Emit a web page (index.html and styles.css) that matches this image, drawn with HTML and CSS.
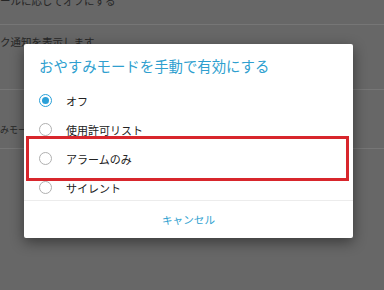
FILE: index.html
```html
<!DOCTYPE html>
<html lang="ja">
<head>
  <meta charset="UTF-8">
  <title>おやすみモード</title>
  <link rel="stylesheet" href="styles.css">
</head>
<body>
  <!-- settings screen behind the dimmed overlay -->
  <div class="settings">
    <div class="setting-row first">
      <p class="setting-text">ールに応じてオフにする</p>
    </div>
    <div class="setting-row second">
      <p class="setting-text">ク通知を表示します</p>
    </div>
    <div class="setting-row third">
      <p class="setting-text">みモードの設定</p>
    </div>
  </div>

  <!-- dialog -->
  <div class="dialog">
    <h2 class="dialog-title">おやすみモードを手動で有効にする</h2>
    <ul class="choice-list">
      <li class="choice"><span class="radio checked"></span>オフ</li>
      <li class="choice"><span class="radio"></span>使用許可リスト</li>
      <li class="choice marked"><span class="radio"></span>アラームのみ</li>
      <li class="choice"><span class="radio"></span>サイレント</li>
    </ul>
    <div class="dialog-actions">
      <button class="text-button">キャンセル</button>
    </div>
  </div>
</body>
</html>
```

FILE: styles.css
```css
body {
  margin: 0;
  width: 384px;
  height: 290px;
  overflow: hidden;
  background-color: #676767;
  font-family: "Noto Sans CJK JP", "Noto Sans", sans-serif;
  position: relative;
}

.settings {
  margin-top: -12px;
}

.setting-row {
  border-bottom: 1px solid #767676;
}

.setting-row.first {
  height: 36px;
}

.setting-row.second {
  height: 64px;
}

.setting-row.third {
  height: 58px;
}

.setting-text {
  margin: 0;
  font-size: 10.5px;
  line-height: 14px;
  color: #262626;
  white-space: nowrap;
}

.first .setting-text {
  padding-top: 6px;
}

.second .setting-text {
  padding-top: 10px;
}

.third .setting-text {
  padding-top: 33px;
  font-size: 9px;
}

.dialog {
  position: absolute;
  left: 24px;
  top: 44px;
  width: 329px;
  height: 194px;
  background-color: white;
  border-radius: 2px;
  box-shadow: 0 4px 14px rgba(0, 0, 0, 0.45);
  display: flex;
  flex-direction: column;
}

.dialog-title {
  margin: 0;
  padding: 12px 15px 0;
  height: 30px;
  font-size: 14.4px;
  line-height: 20px;
  font-weight: normal;
  color: #2f9fcf;
  white-space: nowrap;
}

.choice-list {
  list-style-type: none;
  margin: 0;
  padding: 0;
  height: 114px;
  overflow: hidden;
}

.choice {
  position: relative;
  display: flex;
  align-items: center;
  gap: 14px;
  height: 29px;
  padding-left: 15px;
  font-size: 11px;
  color: #222;
}

.radio {
  width: 11px;
  height: 11px;
  border: 1px solid #b0b0b0;
  border-radius: 50%;
  box-sizing: content-box;
}

.radio.checked {
  width: 7px;
  height: 7px;
  border: 1.5px solid #2aa0d8;
  padding: 2px;
  background-color: #2aa0d8;
  background-clip: content-box;
}

.marked::after {
  content: "";
  position: absolute;
  left: 2px;
  right: 4px;
  top: -8px;
  bottom: -8px;
  border: 3px solid #d8262c;
}

.dialog-actions {
  flex: 1;
  border-top: 1px solid #ececec;
  display: flex;
  align-items: center;
  justify-content: center;
}

.text-button {
  background: none;
  border: none;
  padding: 0;
  font-family: inherit;
  font-size: 10.6px;
  color: #2f9fcf;
  cursor: pointer;
}
```
